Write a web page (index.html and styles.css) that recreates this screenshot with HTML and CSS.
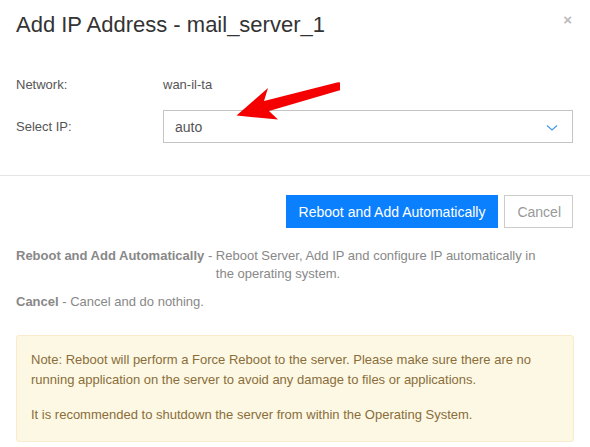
FILE: index.html
```html
<!DOCTYPE html>
<html>
<head>
<meta charset="utf-8">
<link rel="stylesheet" href="styles.css">
</head>
<body>
<div class="modal">
  <div class="header">
    <h4 class="title">Add IP Address - mail_server_1</h4>
    <span class="close">×</span>
  </div>
  <div class="body">
    <div class="row row-net">
      <div class="label">Network:</div>
      <div class="value">wan-il-ta</div>
    </div>
    <div class="row row-sel">
      <div class="label">Select IP:</div>
      <div class="select">
        <span>auto</span>
        <svg class="chev" width="12" height="8" viewBox="0 0 12 8"><path d="M1 1.5 L6 6 L11 1.5" fill="none" stroke="#4a9ae6" stroke-width="1.3"/></svg>
      </div>
    </div>
    <svg class="arrow" width="120" height="50" viewBox="220 75 120 50">
      <path d="M337 84.5 L264 103 L268 90 L236.5 117.5 L278 121.5 L269 113 L339 92.5 A4 4 0 0 0 337 84.5 Z" fill="#f40000"/>
    </svg>
  </div>
  <div class="footer">
    <div class="buttons">
      <button class="btn btn-primary">Reboot and Add Automatically</button>
      <button class="btn btn-default">Cancel</button>
    </div>
    <div class="desc">
      <div class="drow"><b>Reboot and Add Automatically</b><span class="sep">&nbsp;-&nbsp;</span><span class="dtext">Reboot Server, Add IP and configure IP automatically in the operating system.</span></div>
      <div class="drow"><b>Cancel</b><span class="sep">&nbsp;-&nbsp;</span><span class="dtext">Cancel and do nothing.</span></div>
    </div>
    <div class="note">
      <p>Note: Reboot will perform a Force Reboot to the server. Please make sure there are no running application on the server to avoid any damage to files or applications.</p>
      <p>It is recommended to shutdown the server from within the Operating System.</p>
    </div>
  </div>
</div>
</body>
</html>
```
FILE: styles.css
```css
html, body {
  margin: 0;
  padding: 0;
  background: #fff;
}
body {
  font-family: "Liberation Sans", Arial, sans-serif;
  font-size: 13px;
  color: #555;
}
.modal {
  width: 590px;
}
.header {
  display: flex;
  justify-content: space-between;
  align-items: flex-start;
  padding: 12px 18px 0 16px;
  height: 58px;
  box-sizing: border-box;
}
.title {
  margin: 0;
  font-size: 22px;
  font-weight: normal;
  line-height: 26px;
  color: #333;
}
.close {
  color: #bbb;
  font-size: 15px;
  font-weight: bold;
  line-height: 16px;
  margin-top: 0;
}
.body {
  position: relative;
  padding: 16px 17px 32px 16px;
  border-bottom: 1px solid #e5e5e5;
}
.row {
  display: flex;
  align-items: center;
}
.row-net {
  height: 20px;
  margin-bottom: 16px;
}
.label {
  width: 147px;
  flex: none;
}
.select {
  flex: 1;
  height: 33px;
  box-sizing: border-box;
  border: 1px solid #c4c4c4;
  display: flex;
  align-items: center;
  justify-content: space-between;
  padding: 0 14px 0 11px;
  font-size: 14px;
  color: #555;
}
.chev {
  display: block;
  margin-top: 2px;
}
.arrow {
  position: absolute;
  left: 220px;
  top: 15px;
}
.footer {
  padding: 19px 16px 0 16px;
}
.buttons {
  display: flex;
  justify-content: flex-end;
  gap: 6px;
  padding-right: 1px;
}
.btn {
  font-family: "Liberation Sans", Arial, sans-serif;
  font-size: 14px;
  height: 33px;
  padding: 0 12px;
  border: 1px solid transparent;
  border-radius: 0;
  margin: 0;
}
.btn-primary {
  background: #0a80ff;
  border-color: #0a80ff;
  color: #fff;
}
.btn-default {
  background: #fff;
  border-color: #ccc;
  color: #999;
  padding: 0 11px 0 12px;
}
.desc {
  margin-top: 19px;
  color: #888;
  line-height: 18px;
}
.drow {
  display: flex;
  width: 525px;
  margin-bottom: 10px;
}
.drow b {
  flex: none;
  color: #888;
}
.sep {
  flex: none;
}
.dtext {
  flex: 1;
}
.note {
  margin-top: 24px;
  background: #fcf8e3;
  border: 1px solid #faebcc;
  border-radius: 3px;
  color: #8a6d3b;
  padding: 14px 14px 16px 14px;
  line-height: 20px;
}
.note p {
  margin: 0 0 15px 0;
}
.note p:last-child {
  margin-bottom: 0;
}
```
